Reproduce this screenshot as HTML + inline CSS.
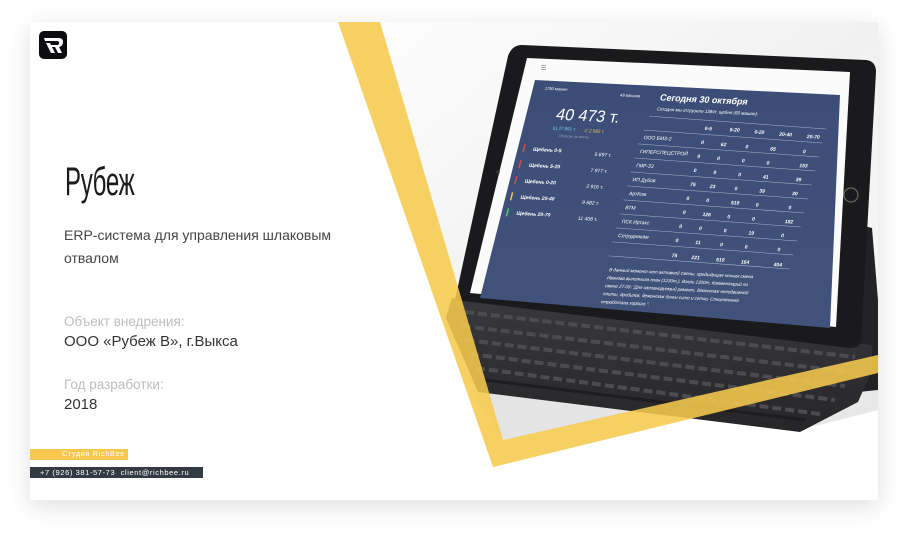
<!DOCTYPE html>
<html><head><meta charset="utf-8"><style>
html,body{margin:0;padding:0;background:#fff;}
body{width:908px;height:538px;position:relative;overflow:hidden;font-family:"Liberation Sans","DejaVu Sans",sans-serif;}
.card{position:absolute;left:30px;top:22px;width:848px;height:478px;background:#fff;box-shadow:0 6px 22px rgba(0,0,0,.13);}
.t{position:absolute;white-space:nowrap;}
</style></head><body>
<div class="card"></div>
<svg width="908" height="538" style="position:absolute;left:0;top:0" xmlns="http://www.w3.org/2000/svg">
<defs>
<clipPath id="c"><rect x="30" y="22" width="848" height="478"/></clipPath>
<linearGradient id="bg" x1="0" y1="0" x2="1" y2="1"><stop offset="0" stop-color="#fdfdfd"/><stop offset=".5" stop-color="#f1f1f2"/><stop offset="1" stop-color="#f8f8f8"/></linearGradient>
<linearGradient id="bl" x1="0" y1="0" x2="0" y2="1"><stop offset="0" stop-color="#3c4e78"/><stop offset="1" stop-color="#41537a"/></linearGradient>
<linearGradient id="kb" x1="0" y1="0" x2="0" y2="1"><stop offset="0" stop-color="#39393b"/><stop offset="1" stop-color="#262628"/></linearGradient>
</defs>
<g clip-path="url(#c)">
<polygon points="380,22 878,22 878,355 503,440" fill="url(#bg)"/>
<polygon points="470,390 800,430 878,410 878,360 503,440" fill="#dedede" opacity=".7"/>
<!-- stand -->
<polygon points="860,225 872,228 878,300 878,390 858,392" fill="#222224"/>
<!-- keyboard -->
<polygon points="452,298 872,345 872,370 858,402 800,432 478,392 446,318" fill="url(#kb)"/>
<g stroke="#4c4c50" stroke-width="4" stroke-dasharray="9 4" fill="none">
<path d="M465,312 L855,357"/><path d="M462,326 L850,372"/><path d="M466,340 L845,386"/><path d="M470,354 L835,400"/><path d="M476,368 L820,414"/>
</g>
<path d="M485,380 L805,420" stroke="#1d1d1f" stroke-width="3"/>
<!-- tablet -->
<path d="M522,45 L866,60 Q876,61 876,72 L861,340 Q860,348 850,348 L455,300 L508,56 Q512,45 522,45 Z" fill="#1a1a1c"/>
<polygon points="527,58 850,72 836,327 470,293" fill="#fbfbfb"/>
<polygon points="535,80 840,95 830,328 480,298" fill="url(#bl)"/>
<circle cx="851" cy="195" r="7" fill="none" stroke="#666" stroke-width="1.2"/>
<circle cx="498" cy="172" r="1.8" fill="#333"/>
<g fill="#aaa"><rect x="541" y="65" width="5" height="1"/><rect x="541" y="67" width="5" height="1"/><rect x="541" y="69" width="5" height="1"/></g>
<g transform="matrix(1,0.05,-0.26,1,535,80)" fill="#fff" font-family="Liberation Sans,sans-serif">
<text x="12" y="9" font-size="4">1750 машин</text>
<text x="88" y="12" font-size="4">49 вагонов</text>
<text x="30" y="38" font-size="16">40 473 т.</text>
<text x="30" y="48" font-size="4.5" fill="#6ecbea">Щ 37 891 т.</text>
<text x="62" y="49" font-size="4.5" fill="#f4c64a">С 2 582 т.</text>
<text x="38" y="55" font-size="3.5" fill="#9aa6c0">Отгрузки за месяц</text>
<g font-size="5" font-weight="bold">
<rect x="6" y="64" width="1.5" height="8" fill="#e04a4a"/><text x="16" y="70">Щебень 0-5</text><text x="78" y="72" font-weight="normal">5 897 т.</text>
<rect x="6" y="80" width="1.5" height="8" fill="#e04a4a"/><text x="16" y="86">Щебень 5-20</text><text x="78" y="88" font-weight="normal">7 977 т.</text>
<rect x="6" y="96" width="1.5" height="8" fill="#e04a4a"/><text x="16" y="102">Щебень 0-20</text><text x="78" y="104" font-weight="normal">2 916 т.</text>
<rect x="6" y="112" width="1.5" height="8" fill="#f4c64a"/><text x="16" y="118">Щебень 20-40</text><text x="78" y="120" font-weight="normal">9 682 т.</text>
<rect x="6" y="128" width="1.5" height="8" fill="#4ad06a"/><text x="16" y="134">Щебень 20-70</text><text x="78" y="136" font-weight="normal">11 408 т.</text>
</g>
<text x="128" y="14" font-size="9" font-weight="bold">Сегодня 30 октября</text>
<text x="128" y="24" font-size="4.5">Сегодня мы отгрузили 1384т. щебня (60 машин):</text>
<g stroke="#aab4cc" stroke-width=".5"><path d="M122,30 L300,34"/><path d="M120,44 L300,48"/><path d="M118,58 L300,62"/><path d="M118,72 L300,76"/><path d="M118,86 L300,90"/><path d="M118,100 L300,104"/><path d="M118,114 L300,118"/><path d="M118,128 L300,132"/><path d="M118,142 L300,146"/><path d="M118,156 L300,160"/><path d="M118,170 L300,174"/></g>
<g font-size="5" font-weight="bold">
<text x="180" y="41">0-5</text><text x="205" y="41">5-20</text><text x="230" y="42">0-20</text><text x="255" y="43">20-40</text><text x="283" y="44">20-70</text>
<g font-weight="normal"><text x="122" y="53">ООО БМЗ-2</text><text x="122" y="67">ГИПЕРСПЕЦСТРОЙ</text><text x="122" y="81">ГМР-33</text><text x="122" y="95">ИП Дубов</text><text x="122" y="109">АртКом</text><text x="122" y="123">ВТМ</text><text x="122" y="137">ПСК Иртакс</text><text x="122" y="151">Сотрудникам</text></g>
<text x="180" y="55">0</text><text x="200" y="56">62</text><text x="225" y="57">0</text><text x="250" y="58">65</text><text x="283" y="59">0</text>
<text x="180" y="69">0</text><text x="200" y="70">0</text><text x="225" y="71">0</text><text x="250" y="72">0</text><text x="283" y="73">153</text>
<text x="180" y="83">0</text><text x="200" y="84">0</text><text x="225" y="85">0</text><text x="250" y="86">41</text><text x="283" y="87">39</text>
<text x="180" y="97">75</text><text x="200" y="98">23</text><text x="225" y="99">0</text><text x="250" y="100">39</text><text x="283" y="101">30</text>
<text x="180" y="111">0</text><text x="200" y="112">0</text><text x="225" y="113">519</text><text x="250" y="114">0</text><text x="283" y="115">0</text>
<text x="180" y="125">0</text><text x="200" y="126">126</text><text x="225" y="127">0</text><text x="250" y="128">0</text><text x="283" y="129">182</text>
<text x="180" y="139">0</text><text x="200" y="140">0</text><text x="225" y="141">0</text><text x="250" y="142">19</text><text x="283" y="143">0</text>
<text x="180" y="153">0</text><text x="200" y="154">11</text><text x="225" y="155">0</text><text x="250" y="156">0</text><text x="283" y="157">0</text>
<text x="180" y="168">75</text><text x="200" y="169">221</text><text x="225" y="170">519</text><text x="250" y="171">164</text><text x="283" y="172">404</text>
</g>
<g font-size="4.5" font-style="italic"><text x="122" y="185">В данный момент нет активной смены, предыдущая ночная смена</text><text x="122" y="193">Иванова выполнила план (1230т.). Взяли 1300т. Комментарий по</text><text x="122" y="201">смене 27.09: "Для запланируемый ремонт, демонтаж неподвижной</text><text x="122" y="209">плиты, дробилок, демонтаж бочки-сито и сетки. Спецтехника</text><text x="122" y="217">отработала хорошо.".</text></g>
</g>
<polygon points="338,22 380,22 503,440 878,355 878,373 493,467" fill="#f6c94e" opacity=".88"/>
</g>
<rect x="39" y="31" width="28" height="28" rx="5" fill="#0c0c10"/>
<path d="M44,38 L59,38 Q63,38 63,42 Q63,46 59,47 L62,53 L58,53 L55,47 L52,47 L55,53 L51,53 L46,43 L50,43 L51,45 L58,45 Q59.5,44 59,42 Q58.5,41 57,41 L45,41 Z" fill="#fff"/>
</svg>
<div class="t" style="left:65px;top:160px;font-size:40px;color:#1a1a1a;transform:scaleX(.6);transform-origin:0 0;letter-spacing:-.5px">Рубеж</div>
<div class="t" style="left:64px;top:224px;font-size:14px;color:#444;line-height:23px">ERP-система для управления шлаковым<br>отвалом</div>
<div class="t" style="left:64px;top:314px;font-size:13.5px;color:#bdbdbd">Объект внедрения:</div>
<div class="t" style="left:64px;top:333px;font-size:15px;color:#333">ООО «Рубеж В», г.Выкса</div>
<div class="t" style="left:64px;top:377px;font-size:13.5px;color:#bdbdbd">Год разработки:</div>
<div class="t" style="left:64px;top:396px;font-size:15px;color:#333">2018</div>
<div style="position:absolute;left:30px;top:449px;width:98px;height:11px;background:#f6c94e"></div>
<div class="t" style="left:62px;top:449px;font-size:7px;line-height:11px;color:#fff;letter-spacing:.8px">Студия RichBee</div>
<div style="position:absolute;left:30px;top:467px;width:173px;height:11px;background:#333a44"></div>
<div class="t" style="left:40px;top:467px;font-size:7.5px;line-height:11px;color:#fff;letter-spacing:.6px;font-family:'Liberation Sans',sans-serif">+7 (926) 381-57-73&nbsp;&nbsp;client@richbee.ru</div>
</body></html>
